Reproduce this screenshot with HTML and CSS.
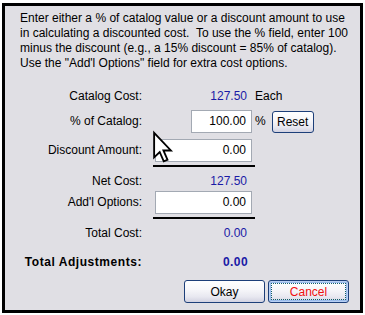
FILE: index.html
```html
<!DOCTYPE html>
<html>
<head>
<meta charset="utf-8">
<link rel="stylesheet" href="styles.css">
</head>
<body>
<div class="backdrop">
  <div class="dialog">
    <p class="intro">Enter either a % of catalog value or a discount amount to use in calculating a discounted cost.&nbsp; To use the % field, enter 100 minus the discount (e.g., a 15% discount = 85% of catalog). Use the "Add'l Options" field for extra cost options.</p>
    <div class="form">
      <div class="row row-text r1">
        <span class="label">Catalog Cost:</span>
        <span class="val blue">127.50</span>
        <span class="extra">Each</span>
      </div>
      <div class="row r2">
        <span class="label">% of Catalog:</span>
        <span class="val"><span class="input narrow">100.00</span></span>
        <span class="extra">% <button class="btn reset">Reset</button></span>
      </div>
      <div class="row r3">
        <span class="label">Discount Amount:</span>
        <span class="val"><span class="input">0.00</span></span>
      </div>
      <div class="rule"></div>
      <div class="row row-text r4">
        <span class="label">Net Cost:</span>
        <span class="val blue">127.50</span>
      </div>
      <div class="row r5">
        <span class="label">Add'l Options:</span>
        <span class="val"><span class="input">0.00</span></span>
      </div>
      <div class="rule"></div>
      <div class="row row-text r6">
        <span class="label">Total Cost:</span>
        <span class="val blue">0.00</span>
      </div>
      <div class="row row-text r7 bold">
        <span class="label">Total Adjustments:</span>
        <span class="val blue">0.00</span>
      </div>
      <div class="buttons">
        <button class="btn wide">Okay</button>
        <button class="btn wide cancel"><span class="focus">Cancel</span></button>
      </div>
    </div>
    <svg class="cursor" width="19" height="31" viewBox="0 0 12 20">
      <path d="M0.6 0.6 L0.6 16.4 L4.2 12.9 L6.8 18.9 L9.2 17.9 L6.6 11.9 L11.4 11.9 Z" fill="#fff" stroke="#000" stroke-width="1.2" stroke-linejoin="miter"/>
    </svg>
  </div>
</div>
</body>
</html>
```

FILE: styles.css
```css
html, body {
  margin: 0;
  padding: 0;
  background: #ffffff;
}

.backdrop {
  width: 365px;
  height: 315px;
  padding: 3px 0 0 2px;
  box-sizing: border-box;
}

.dialog {
  position: relative;
  box-sizing: border-box;
  width: 361px;
  height: 310px;
  border: 3px solid #000;
  background: #e0dfe4;
  padding: 5px 11px 0 15px;
  font-family: "Liberation Sans", Arial, sans-serif;
  font-size: 12px;
  color: #000;
}

.intro {
  margin: 0;
  line-height: 15px;
}

.form {
  margin-top: 15px;
}

.row {
  display: flex;
  align-items: center;
  height: 23px;
  line-height: 15px;
}

.row-text {
  height: 20px;
}

.label {
  width: 122px;
  margin-right: 13px;
  text-align: right;
  flex: none;
  white-space: nowrap;
}

.val {
  width: 97px;
  flex: none;
  display: flex;
  justify-content: flex-end;
  box-sizing: border-box;
}

.row-text .val {
  padding-right: 5px;
}

.blue {
  color: #1a1aa6;
}

.extra {
  padding-left: 3px;
  display: flex;
  align-items: center;
}

.input {
  display: block;
  box-sizing: border-box;
  width: 97px;
  height: 23px;
  border: 1px solid #a3a9b3;
  background: #fff;
  text-align: right;
  padding: 3px 5px 0 0;
  line-height: 15px;
}

.input.narrow {
  width: 61px;
}

.r2 { margin-top: 4px; }
.r3 { margin-top: 6px; }
.r4 { margin-top: 4px; }
.r5 { margin-top: 0; }
.r6 { margin-top: 4px; }
.r7 { margin-top: 9px; }

.bold {
  font-weight: bold;
}

.bold .label {
  letter-spacing: 0.55px;
  margin-right: 14px;
}

.bold .val {
  letter-spacing: 0.4px;
}

.rule {
  margin: 3px 0 0 133px;
  width: 102px;
  height: 2px;
  background: #000;
}

.btn {
  box-sizing: border-box;
  font-family: "Liberation Sans", Arial, sans-serif;
  font-size: 12px;
  color: #000;
  border: 1px solid #1d3f79;
  border-radius: 3px;
  background: linear-gradient(to bottom, #ffffff 0%, #f7f7fa 40%, #e8e8f0 75%, #d2d2e1 100%);
  padding: 0;
  margin: 0;
}

.reset {
  width: 42px;
  height: 22px;
  margin-left: 6px;
}

.buttons {
  display: flex;
  gap: 3px;
  margin-top: 8px;
  padding-left: 164px;
}

.wide {
  width: 81px;
  height: 23px;
}

.cancel {
  color: #f01010;
  box-shadow: inset 0 0 0 1px #b8d0f4, inset 0 0 0 2px #9bbbeb;
  padding: 2px;
  display: flex;
}

.focus {
  flex: 1;
  display: flex;
  align-items: center;
  justify-content: center;
  border: 1px dotted #0f5e6a;
}

.cursor {
  position: absolute;
  left: 148px;
  top: 126px;
  overflow: visible;
}
```
